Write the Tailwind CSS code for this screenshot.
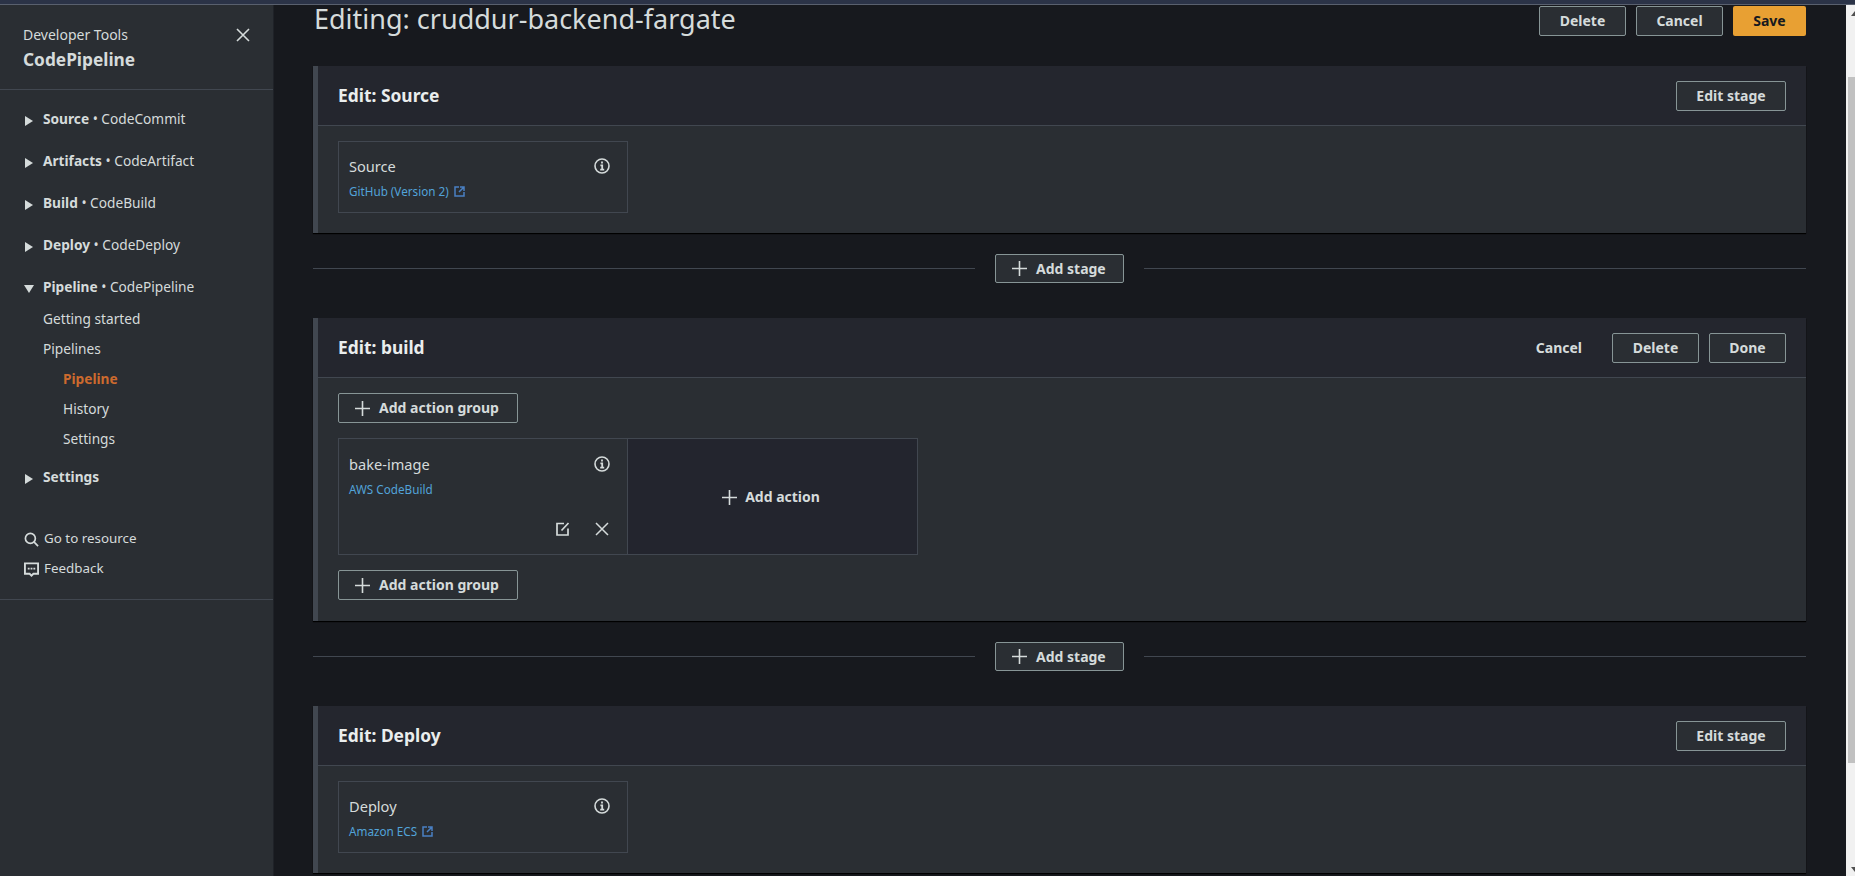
<!DOCTYPE html>
<html lang="en">
<head>
    <meta charset="UTF-8">
    <title>CodePipeline - Editing</title>
    <script src="https://cdn.jsdelivr.net/npm/@tailwindcss/browser@4"></script>
</head>
<body class="h-screen overflow-hidden flex flex-col bg-[#17191e] text-[#d5dbdb] font-['Noto_Sans',sans-serif] text-sm">
    <!-- Window strip -->
    <div class="h-[5px] shrink-0 bg-[#2b3347] border-b border-[#59606e]"></div>

    <div class="flex flex-1 min-h-0">
        <!-- Sidebar -->
        <aside class="w-[274px] shrink-0 bg-[#2a2e33] border-r border-[#1f2228] flex flex-col">
            <div class="h-[85px] shrink-0 border-b border-[#414750] pl-[23px] pr-[22px] pt-[20px] flex justify-between items-start">
                <div>
                    <div class="leading-5 text-[14px]">Developer Tools</div>
                    <div class="mt-[5px] leading-5 text-[17.3px] font-bold">CodePipeline</div>
                </div>
                <svg class="w-4 h-4 mt-[2px]" viewBox="0 0 16 16" fill="none" stroke="#d5dbdb" stroke-width="1.6"><path d="M2 2l12 12M14 2L2 14"/></svg>
            </div>

            <nav class="pt-[8px] pl-[24px] text-[13.7px]">
                <div class="h-[42px] flex items-center"><svg class="w-[10px] h-[10px] mr-[9px] mt-[3px]" viewBox="0 0 10 10" fill="#d5dbdb"><path d="M1 0l8 5-8 5z"/></svg><span><b>Source</b> • CodeCommit</span></div>
                <div class="h-[42px] flex items-center"><svg class="w-[10px] h-[10px] mr-[9px] mt-[3px]" viewBox="0 0 10 10" fill="#d5dbdb"><path d="M1 0l8 5-8 5z"/></svg><span><b>Artifacts</b> • CodeArtifact</span></div>
                <div class="h-[42px] flex items-center"><svg class="w-[10px] h-[10px] mr-[9px] mt-[3px]" viewBox="0 0 10 10" fill="#d5dbdb"><path d="M1 0l8 5-8 5z"/></svg><span><b>Build</b> • CodeBuild</span></div>
                <div class="h-[42px] flex items-center"><svg class="w-[10px] h-[10px] mr-[9px] mt-[3px]" viewBox="0 0 10 10" fill="#d5dbdb"><path d="M1 0l8 5-8 5z"/></svg><span><b>Deploy</b> • CodeDeploy</span></div>
                <div class="h-[42px] flex items-center"><svg class="w-[10px] h-[10px] mr-[9px] mt-[3px]" viewBox="0 0 10 10" fill="#d5dbdb"><path d="M0 1l5 8 5-8z"/></svg><span><b>Pipeline</b> • CodePipeline</span></div>
                <div class="pl-[19px] -mt-[4px]">
                    <div class="h-[30px] flex items-center">Getting started</div>
                    <div class="h-[30px] flex items-center">Pipelines</div>
                    <div class="h-[30px] flex items-center pl-[20px] font-bold text-[#cc6a2e]">Pipeline</div>
                    <div class="h-[30px] flex items-center pl-[20px]">History</div>
                    <div class="h-[30px] flex items-center pl-[20px]">Settings</div>
                </div>
                <div class="h-[42px] flex items-center mt-[2px]"><svg class="w-[10px] h-[10px] mr-[9px] mt-[3px]" viewBox="0 0 10 10" fill="#d5dbdb"><path d="M1 0l8 5-8 5z"/></svg><b>Settings</b></div>
            </nav>

            <div class="mt-[26px] pl-[24px] pb-[15px] border-b border-[#414750] text-[13.4px]">
                <div class="h-[30px] flex items-center gap-[5px]">
                    <svg class="w-[15px] h-[15px]" viewBox="0 0 16 16" fill="none" stroke="#d5dbdb" stroke-width="1.8"><circle cx="6.8" cy="6.8" r="5.3"/><path d="M10.6 10.6L15 15"/></svg>
                    <span>Go to resource</span>
                </div>
                <div class="h-[30px] flex items-center gap-[5px]">
                    <svg class="w-[15px] h-[15px]" viewBox="0 0 16 16" fill="none" stroke="#d5dbdb" stroke-width="2"><path d="M1 1.5h14v11H10l-2 2-2-2H1z"/><path d="M4 7h2M7 7h2M10 7h2"/></svg>
                    <span>Feedback</span>
                </div>
            </div>
        </aside>

        <!-- Main -->
        <main class="flex-1 min-w-0 pl-[39px] pr-[40px]">
            <div class="h-[31px] flex items-center justify-between">
                <h1 class="text-[27px] leading-[36px] text-[#d5dbdb] pl-[1px] -mt-[3px]">Editing: cruddur-backend-fargate</h1>
                <div class="flex gap-[10px]">
                    <button class="w-[87px] h-[30px] rounded-[2px] border border-[#879596] bg-[#2a2e33] font-bold">Delete</button>
                    <button class="w-[87px] h-[30px] rounded-[2px] border border-[#879596] bg-[#2a2e33] font-bold">Cancel</button>
                    <button class="w-[73px] h-[30px] rounded-[2px] bg-[#e8a033] text-[#16191f] font-bold">Save</button>
                </div>
            </div>

            <!-- Source -->
            <section class="mt-[30px] border-l-[5px] border-[#414750] bg-[#2a2e33] shadow-[0_1px_1px_#000]">
                <div class="h-[60px] px-[20px] flex items-center justify-between bg-[#24262e] border-b border-[#414750]">
                    <h2 class="text-[17.4px] font-bold text-[#eaeded]">Edit: Source</h2>
                    <button class="w-[110px] h-[30px] rounded-[2px] border border-[#879596] bg-[#2a2e33] font-bold">Edit stage</button>
                </div>
                <div class="pt-[15px] pb-[20px] pl-[20px]">
                    <div class="w-[290px] h-[72px] border border-[#414750] px-[10px] pt-[14px]">
                        <div class="flex justify-between items-center pr-[7px] leading-5 text-[14.6px]">
                            <span>Source</span>
                            <svg class="w-4 h-4" viewBox="0 0 16 16" fill="none" stroke="#d5dbdb"><circle cx="8" cy="8" r="7" stroke-width="1.6"/><path d="M8 3.6v2M6.4 7.4H8.2V11.6M6.2 11.6h4" stroke-width="1.8"/></svg>
                        </div>
                        <div class="mt-[5px] flex items-center gap-[5px] text-[11.7px] leading-5 text-[#52a3d9]">
                            <span>GitHub (Version 2)</span>
                            <svg class="w-[11px] h-[11px]" viewBox="0 0 11 11" fill="none" stroke="#4a80c4" stroke-width="1.5"><path d="M5 1H1v9h9V6M6 1h4v4M10 1L5 6"/></svg>
                        </div>
                    </div>
                </div>
            </section>

            <!-- Add stage -->
            <div class="mt-[21px] h-[29px] flex items-center">
                <div class="flex-1 h-px bg-[#414750]"></div>
                <button class="mx-[20px] w-[129px] h-[29px] rounded-[2px] border border-[#879596] bg-[#2a2e33] font-bold flex items-center pl-[16px] gap-[9px]">
                    <svg class="w-[15px] h-[15px]" viewBox="0 0 15 15" stroke="#d5dbdb" stroke-width="1.6"><path d="M7.5 0v15M0 7.5h15"/></svg>Add stage
                </button>
                <div class="flex-1 h-px bg-[#414750]"></div>
            </div>

            <!-- build -->
            <section class="mt-[35px] border-l-[5px] border-[#414750] bg-[#2a2e33] shadow-[0_1px_1px_#000]">
                <div class="h-[60px] px-[20px] flex items-center justify-between bg-[#24262e] border-b border-[#414750]">
                    <h2 class="text-[17.4px] font-bold text-[#eaeded]">Edit: build</h2>
                    <div class="flex items-center">
                        <span class="font-bold mr-[30px]">Cancel</span>
                        <button class="w-[87px] h-[30px] rounded-[2px] border border-[#879596] bg-[#2a2e33] font-bold mr-[10px]">Delete</button>
                        <button class="w-[77px] h-[30px] rounded-[2px] border border-[#879596] bg-[#2a2e33] font-bold">Done</button>
                    </div>
                </div>
                <div class="pt-[15px] pb-[21px] pl-[20px]">
                    <button class="w-[180px] h-[30px] rounded-[2px] border border-[#879596] bg-[#2a2e33] font-bold flex items-center pl-[16px] gap-[9px]">
                        <svg class="w-[15px] h-[15px]" viewBox="0 0 15 15" stroke="#d5dbdb" stroke-width="1.6"><path d="M7.5 0v15M0 7.5h15"/></svg>Add action group
                    </button>
                    <div class="mt-[15px] w-[580px] h-[117px] border border-[#414750] flex">
                        <div class="w-[289px] border-r border-[#414750] px-[10px] pt-[15px] relative">
                            <div class="flex justify-between items-center pr-[7px] leading-5 text-[14.6px]">
                                <span>bake-image</span>
                                <svg class="w-4 h-4" viewBox="0 0 16 16" fill="none" stroke="#d5dbdb"><circle cx="8" cy="8" r="7" stroke-width="1.6"/><path d="M8 3.6v2M6.4 7.4H8.2V11.6M6.2 11.6h4" stroke-width="1.8"/></svg>
                            </div>
                            <div class="mt-[5px] text-[11.7px] leading-5 text-[#52a3d9]">AWS CodeBuild</div>
                            <div class="absolute right-[18px] bottom-[18px] flex gap-[25px]">
                                <svg class="w-[14px] h-[14px]" viewBox="0 0 14 14" fill="none" stroke="#d5dbdb" stroke-width="1.7"><path d="M8 1.5H1v11.5h11V6.5M5.5 8.5l7-7.5"/></svg>
                                <svg class="w-[14px] h-[14px]" viewBox="0 0 14 14" fill="none" stroke="#d5dbdb" stroke-width="1.5"><path d="M1 1l12 12M13 1L1 13"/></svg>
                            </div>
                        </div>
                        <div class="flex-1 bg-[#23252e] flex items-center justify-center gap-[8px] font-bold pt-[1px] pr-[3px]">
                            <svg class="w-[15px] h-[15px]" viewBox="0 0 15 15" stroke="#d5dbdb" stroke-width="1.6"><path d="M7.5 0v15M0 7.5h15"/></svg>Add action
                        </div>
                    </div>
                    <button class="mt-[15px] w-[180px] h-[30px] rounded-[2px] border border-[#879596] bg-[#2a2e33] font-bold flex items-center pl-[16px] gap-[9px]">
                        <svg class="w-[15px] h-[15px]" viewBox="0 0 15 15" stroke="#d5dbdb" stroke-width="1.6"><path d="M7.5 0v15M0 7.5h15"/></svg>Add action group
                    </button>
                </div>
            </section>

            <!-- Add stage -->
            <div class="mt-[21px] h-[29px] flex items-center">
                <div class="flex-1 h-px bg-[#414750]"></div>
                <button class="mx-[20px] w-[129px] h-[29px] rounded-[2px] border border-[#879596] bg-[#2a2e33] font-bold flex items-center pl-[16px] gap-[9px]">
                    <svg class="w-[15px] h-[15px]" viewBox="0 0 15 15" stroke="#d5dbdb" stroke-width="1.6"><path d="M7.5 0v15M0 7.5h15"/></svg>Add stage
                </button>
                <div class="flex-1 h-px bg-[#414750]"></div>
            </div>

            <!-- Deploy -->
            <section class="mt-[35px] border-l-[5px] border-[#414750] bg-[#2a2e33] shadow-[0_1px_1px_#000]">
                <div class="h-[60px] px-[20px] flex items-center justify-between bg-[#24262e] border-b border-[#414750]">
                    <h2 class="text-[17.4px] font-bold text-[#eaeded]">Edit: Deploy</h2>
                    <button class="w-[110px] h-[30px] rounded-[2px] border border-[#879596] bg-[#2a2e33] font-bold">Edit stage</button>
                </div>
                <div class="pt-[15px] pb-[20px] pl-[20px]">
                    <div class="w-[290px] h-[72px] border border-[#414750] px-[10px] pt-[14px]">
                        <div class="flex justify-between items-center pr-[7px] leading-5 text-[14.6px]">
                            <span>Deploy</span>
                            <svg class="w-4 h-4" viewBox="0 0 16 16" fill="none" stroke="#d5dbdb"><circle cx="8" cy="8" r="7" stroke-width="1.6"/><path d="M8 3.6v2M6.4 7.4H8.2V11.6M6.2 11.6h4" stroke-width="1.8"/></svg>
                        </div>
                        <div class="mt-[5px] flex items-center gap-[5px] text-[11.7px] leading-5 text-[#52a3d9]">
                            <span>Amazon ECS</span>
                            <svg class="w-[11px] h-[11px]" viewBox="0 0 11 11" fill="none" stroke="#4a80c4" stroke-width="1.5"><path d="M5 1H1v9h9V6M6 1h4v4M10 1L5 6"/></svg>
                        </div>
                    </div>
                </div>
            </section>
        </main>

        <!-- Scrollbar -->
        <div class="w-[9px] shrink-0 bg-[#f1f1f1] flex flex-col items-end">
            <svg class="w-[4px] h-[5px] mt-[6px] shrink-0" viewBox="0 0 4 5" fill="#505050"><path d="M4 0L0 5h4z"/></svg>
            <div class="w-[7px] h-[686px] mt-[61px] shrink-0 bg-[#c1c1c1]"></div>
            <svg class="w-[4px] h-[5px] mt-[104px] shrink-0" viewBox="0 0 4 5" fill="#505050"><path d="M0 0h4v5z"/></svg>
        </div>
    </div>
</body>
</html>
